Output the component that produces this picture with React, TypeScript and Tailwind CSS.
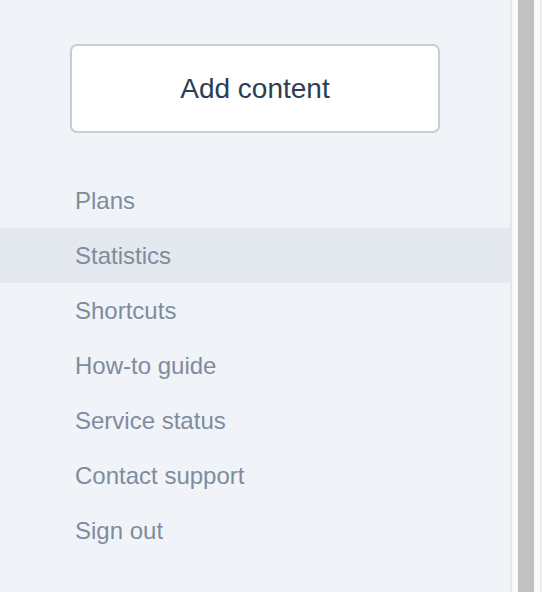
import React from 'react';

const ITEMS = ['Plans', 'Statistics', 'Shortcuts', 'How-to guide', 'Service status', 'Contact support', 'Sign out'];

export default function App() {
  return (
    <div className="flex h-[592px] w-[552px] overflow-hidden bg-white" style={{ fontFamily: '"Liberation Sans", Arial, sans-serif' }}>
      {/* Sidebar */}
      <div className="h-full w-[512px] shrink-0 border-r-2 border-[#e4e6e9] bg-[#f0f4f9] pt-[44px]">
        <button className="ml-[70px] flex h-[89px] w-[370px] items-center justify-center rounded-[7px] border-2 border-[#c8ccd3] bg-white text-[28px] text-[#2c3e55]">
          Add content
        </button>
        <nav className="mt-[40px]">
          {ITEMS.map((item) => (
            <div
              key={item}
              className={`flex h-[55px] items-center pl-[75px] text-[24px] text-[#7f8c9d] ${item === 'Statistics' ? 'bg-[#e4e8ef]' : ''}`}
            >
              {item}
            </div>
          ))}
        </nav>
      </div>
      {/* Scrollbar */}
      <div className="flex h-full w-[28px] shrink-0 bg-[#fafafa] pl-[6px] pr-[4px]">
        <div className="h-full w-[16px] bg-[#c1c1c1]" />
      </div>
      <div className="h-full w-[2px] shrink-0 bg-[#ececec]" />
      <div className="h-full flex-1 bg-white" />
    </div>
  );
}
